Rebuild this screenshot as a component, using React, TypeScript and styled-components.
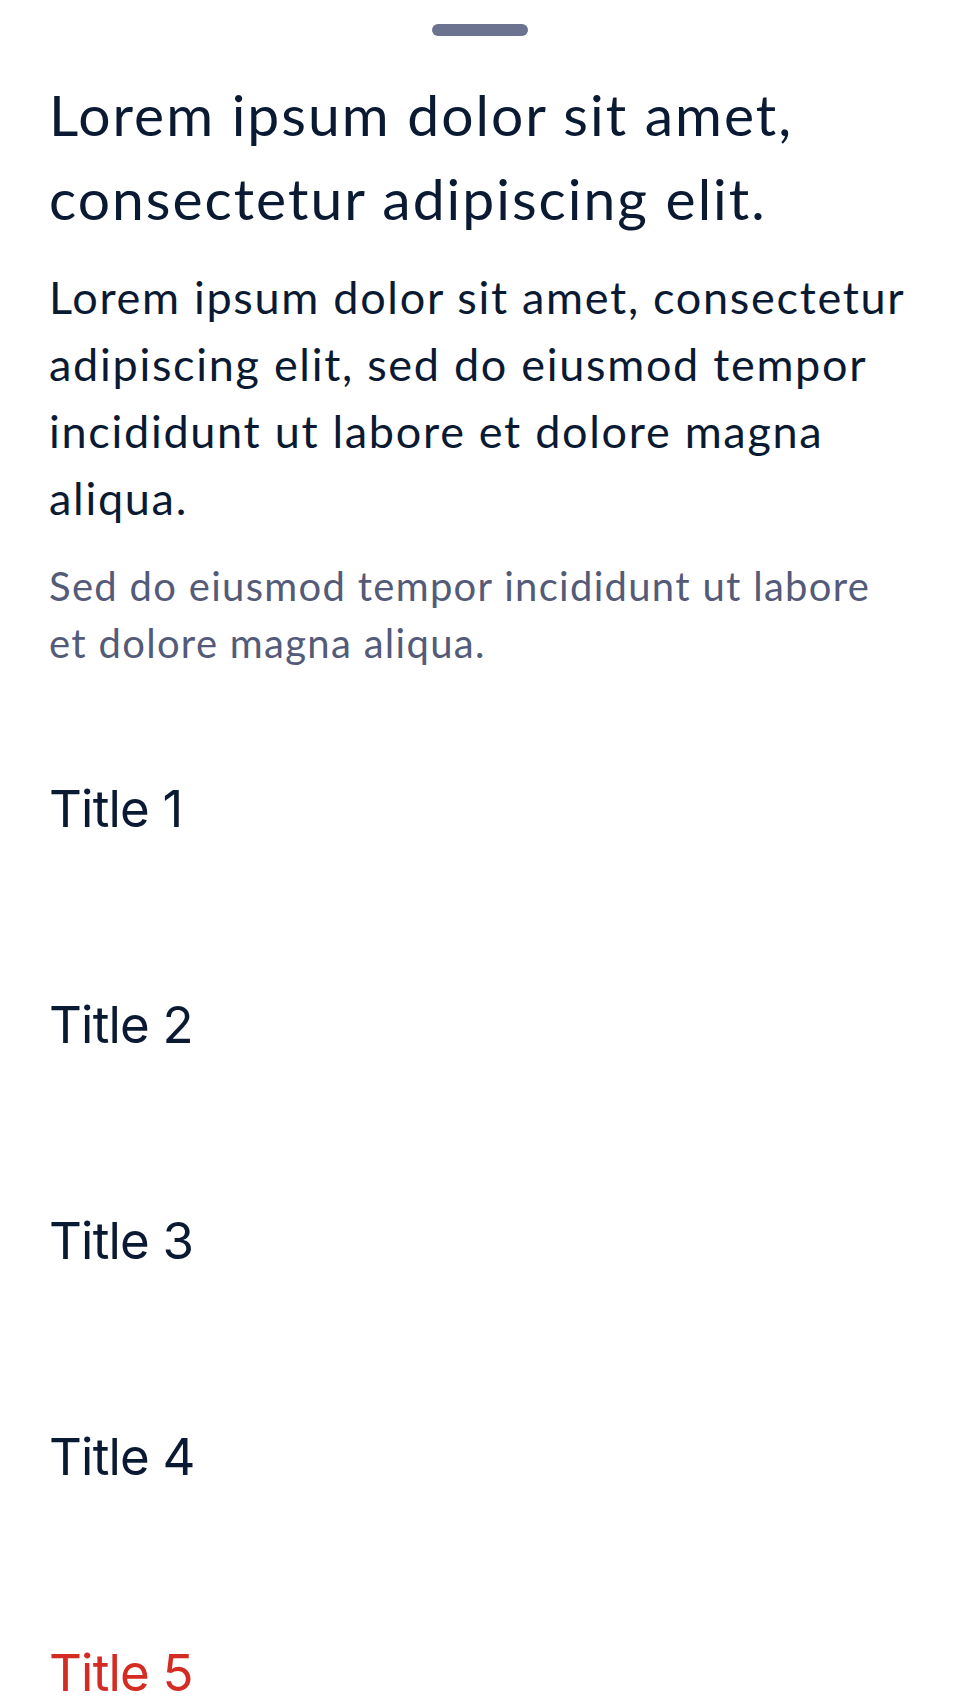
import React from "react";
import styled, { createGlobalStyle } from "styled-components";

const GlobalStyle = createGlobalStyle`
  html, body {
    margin: 0;
    padding: 0;
    background: #ffffff;
  }
  * { box-sizing: border-box; }
`;

const Sheet = styled.div`
  display: flex;
  flex-direction: column;
  padding: 24px 49px 0 49px;
  background: #ffffff;
  min-height: 1704px;
  overflow: hidden;
`;

const Handle = styled.div`
  align-self: center;
  width: 96px;
  height: 12px;
  border-radius: 6px;
  background: #6c7391;
`;

const Heading = styled.h1`
  margin: 36px 0 0 0;
  font-family: Lato, "Open Sans", sans-serif;
  font-weight: 400;
  font-size: 57px;
  line-height: 84px;
  letter-spacing: 2px;
  color: #0b1a33;
`;

const Body = styled.p`
  margin: 24px 0 0 0;
  font-family: Lato, "Open Sans", sans-serif;
  font-size: 45px;
  line-height: 67px;
  letter-spacing: 1.7px;
  color: #0b1a33;
`;

const Secondary = styled.p`
  margin: 26px 0 0 0;
  font-family: Lato, "Open Sans", sans-serif;
  font-size: 40px;
  line-height: 57px;
  letter-spacing: 1.3px;
  color: #545b78;
`;

const List = styled.ul`
  list-style: none;
  margin: 28px 0 0 0;
  padding: 0;
  display: flex;
  flex-direction: column;
`;

const Row = styled.li<{ $danger?: boolean }>`
  height: 216px;
  display: flex;
  align-items: center;
  font-family: Inter, Roboto, sans-serif;
  font-size: 51px;
  letter-spacing: -0.8px;
  color: ${(p) => (p.$danger ? "#d42b22" : "#0b1a33")};
`;

const items = [
  { label: "Title 1" },
  { label: "Title 2" },
  { label: "Title 3" },
  { label: "Title 4" },
  { label: "Title 5", danger: true },
];

export default function App() {
  return (
    <>
      <GlobalStyle />
      <Sheet>
        <Handle />
        <Heading>Lorem ipsum dolor sit amet, consectetur adipiscing elit.</Heading>
        <Body>
          Lorem ipsum dolor sit amet, consectetur adipiscing elit, sed do eiusmod tempor
          incididunt ut labore et dolore magna aliqua.
        </Body>
        <Secondary>
          Sed do eiusmod tempor incididunt ut labore et dolore magna aliqua.
        </Secondary>
        <List>
          {items.map((it) => (
            <Row key={it.label} $danger={it.danger}>
              {it.label}
            </Row>
          ))}
        </List>
      </Sheet>
    </>
  );
}
